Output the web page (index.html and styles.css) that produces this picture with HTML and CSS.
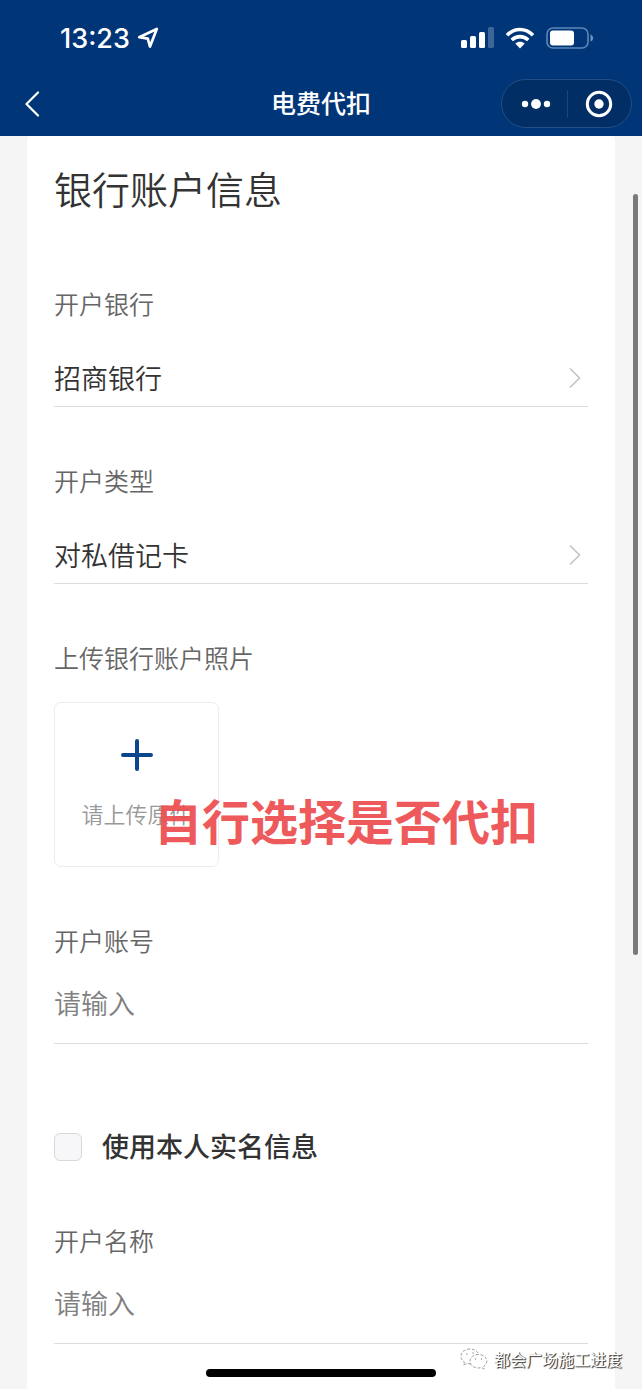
FILE: index.html
```html
<!DOCTYPE html>
<html lang="zh-CN">
<head>
<meta charset="utf-8">
<meta name="viewport" content="width=device-width, initial-scale=1">
<title>电费代扣</title>
<link rel="stylesheet" href="styles.css">
</head>
<body>
<div class="page">
  <header class="topbar">
    <div class="status">
      <div class="status-side">
        <span class="clock">13:23</span>
        <svg class="locate" width="22" height="22" viewBox="0 0 22 22" aria-hidden="true"><path d="M2.200 10.200 19.800 2 13 19.600 10.800 11.600Z" fill="none" stroke="currentColor" stroke-width="2.700" stroke-linejoin="round"/></svg>
      </div>
      <div class="status-side status-icons">
        <svg width="33" height="22" viewBox="0 0 33 22" aria-hidden="true"><g fill="#fff"><rect x="0" y="13" width="6" height="8" rx="1.5"/><rect x="9" y="9" width="6" height="12" rx="1.5"/><rect x="18" y="5" width="6" height="16" rx="1.5"/><rect x="27" y="0" width="6" height="21" rx="1.5" opacity=".24"/></g></svg>
        <svg width="30" height="22" viewBox="0 0 30 22" aria-hidden="true"><g fill="none" stroke="#fff" stroke-width="3.6"><path d="M2 8.2C9.500 .5 20.500 .5 28 8.200"/><path d="M6.700 13C11.500 8.500 18.500 8.500 23.300 13"/></g><path d="M10.300 16.600C13 14.200 17 14.200 19.700 16.600L15 21.500Z" fill="#fff"/></svg>
        <svg width="48" height="22" viewBox="0 0 48 22" aria-hidden="true"><rect x="1" y="1" width="41" height="20" rx="6" fill="none" stroke="#5f86b7" stroke-width="1.600"/><rect x="4" y="3.500" width="24" height="15" rx="3" fill="#fff"/><path d="M44.500 7.500C48 8.500 48 13.500 44.500 14.500Z" fill="#7094c1"/></svg>
      </div>
    </div>
    <nav class="nav">
      <button class="icon-button back" type="button" aria-label="返回"><svg width="16" height="26" viewBox="0 0 16 26"><path d="M14 1.500 2.500 13 14 24.500" fill="none" stroke="#fff" stroke-width="2.200" stroke-linecap="round" stroke-linejoin="round"/></svg></button>
      <h1 class="nav-title">电费代扣</h1>
      <div class="capsule">
        <button class="icon-button" type="button" aria-label="更多"><svg width="30" height="12" viewBox="0 0 30 12" fill="#fff"><circle cx="4" cy="6" r="3.200"/><circle cx="15" cy="6" r="4.900"/><circle cx="26" cy="6" r="3.200"/></svg></button>
        <button class="icon-button" type="button" aria-label="关闭"><svg width="28" height="28" viewBox="0 0 28 28"><circle cx="14" cy="14" r="11.700" fill="none" stroke="#fff" stroke-width="3"/><circle cx="14" cy="14" r="4.700" fill="#fff"/></svg></button>
      </div>
    </nav>
  </header>

  <main class="card">
    <h2 class="heading">银行账户信息</h2>
    <form class="form">
      <div class="field">
        <label class="label" for="bank">开户银行</label>
        <div class="picker">
          <select class="control" id="bank"><option>招商银行</option></select>
          <svg class="chevron" width="14" height="22" viewBox="0 0 14 22" aria-hidden="true"><path d="M2 1.500 11.500 11 2 20.500" fill="none" stroke="currentColor" stroke-width="1.600"/></svg>
        </div>
      </div>
      <div class="field">
        <label class="label" for="type">开户类型</label>
        <div class="picker">
          <select class="control" id="type"><option>对私借记卡</option></select>
          <svg class="chevron" width="14" height="22" viewBox="0 0 14 22" aria-hidden="true"><path d="M2 1.500 11.500 11 2 20.500" fill="none" stroke="currentColor" stroke-width="1.600"/></svg>
        </div>
      </div>
      <div class="field upload-field">
        <span class="label" id="photo-label">上传银行账户照片</span>
        <button class="upload" type="button" aria-describedby="photo-label">
          <svg width="32" height="32" viewBox="0 0 32 32" aria-hidden="true"><path d="M16 2V30M2 16H30" stroke="#0a468c" stroke-width="4" stroke-linecap="round"/></svg>
          <span>请上传原件</span>
        </button>
        <p class="caption">自行选择是否代扣</p>
      </div>
      <div class="field">
        <label class="label" for="account">开户账号</label>
        <input class="control text-input" id="account" type="text" placeholder="请输入">
      </div>
      <label class="check"><input class="checkbox" type="checkbox"><span>使用本人实名信息</span></label>
      <div class="field">
        <label class="label" for="name">开户名称</label>
        <input class="control text-input" id="name" type="text" placeholder="请输入">
      </div>
    </form>
  </main>

  <div class="scroll-thumb"></div>
  <div class="home-indicator"></div>
  <div class="watermark">
    <svg width="28" height="22" viewBox="0 0 28 22" aria-hidden="true"><g fill="#fff" stroke="#888" stroke-width=".8" stroke-dasharray="3 1.600"><path d="M10 1C4.500 1 1 4.400 1 8.300c0 2.500 1.300 4.500 3.400 5.800L3.500 17l3.300-1.700 3.200.5c5 0 9-3.400 9-7.500S15 1 10 1Z"/><path d="M18.500 6.500c-4.800 0-8.500 3-8.500 6.800s3.700 6.700 8.500 6.700l3-.4 2.800 1.500-.7-2.600c2-1.300 3.200-3.100 3.200-5.200 0-3.800-3.600-6.800-8.300-6.800Z"/></g><g fill="#888"><circle cx="7" cy="6" r=".7"/><circle cx="13" cy="5" r=".7"/><circle cx="15.500" cy="11" r=".7"/><circle cx="21.500" cy="11" r=".7"/></g></svg>
    <span>都会广场施工进度</span>
  </div>
</div>
</body>
</html>
```
FILE: styles.css
```css
* { box-sizing: border-box; }

body {
  margin: 0;
  background: #f5f5f5;
  color: #333;
  font-family: "Noto Sans CJK SC", "Noto Sans", sans-serif;
}

h1, h2, p { margin: 0; }

button, input, select {
  margin: 0;
  padding: 0;
  border: 0;
  border-radius: 0;
  background: none;
  color: inherit;
  font: inherit;
}

svg { display: block; flex: none; }

.page {
  position: relative;
  display: flex;
  flex-direction: column;
  min-height: 100vh;
  overflow: hidden;
}

.topbar {
  padding: 16px 10px 8px;
  background: #003578;
  color: #fff;
}

.status {
  display: flex;
  justify-content: space-between;
  align-items: center;
  height: 44px;
  padding: 0 38px 0 50px;
}

.status-side {
  display: flex;
  align-items: center;
  gap: 7px;
}

.status-icons { gap: 11px; }

.clock {
  padding-top: 2px;
  font: 500 27px/32px Inter, sans-serif;
}

.nav {
  display: grid;
  grid-template-columns: 1fr auto 1fr;
  align-items: center;
  margin-top: 19px;
}

.icon-button {
  display: flex;
  align-items: center;
  justify-content: center;
  cursor: pointer;
}

.back {
  justify-self: start;
  width: 44px;
  height: 48px;
}

.nav-title {
  padding-bottom: 3px;
  font-size: 25px;
  font-weight: 500;
  line-height: 36px;
}

.capsule {
  justify-self: end;
  display: grid;
  grid-template-columns: 1fr 1fr;
  align-items: center;
  width: 131px;
  height: 49px;
  border: 1px solid #244e84;
  border-radius: 25px;
  background: #002e65;
}

.capsule .icon-button { height: 28px; padding-left: 4px; }
.capsule .icon-button + .icon-button { border-left: 1px solid #1c4578; padding-left: 0; }

.card {
  flex: 1;
  margin: 0 27px;
  padding: 24px 27px 40px;
  border-radius: 4px 4px 0 0;
  background: #fff;
}

.heading {
  margin-bottom: 70px;
  font-size: 38px;
  font-weight: 350;
  line-height: 56px;
}

.form {
  display: flex;
  flex-direction: column;
  gap: 56px;
}

.field {
  display: flex;
  flex-direction: column;
}

.label {
  padding-bottom: 2px;
  color: #666;
  font-size: 25px;
  font-weight: 350;
  line-height: 34px;
}

.control {
  width: 100%;
  appearance: none;
  outline: none;
  font-size: 27px;
  font-weight: 350;
}

.picker {
  display: flex;
  align-items: center;
  height: 57px;
  margin-top: 28px;
  padding-right: 6px;
  border-bottom: 1px solid #ddd;
}

.picker .control { padding-bottom: 2px; }

.chevron { color: #c4c4c4; }

.text-input {
  height: 85px;
  padding-top: 2px;
  border-bottom: 1px solid #ddd;
}

.text-input::placeholder { color: #808080; opacity: 1; }

.upload-field { position: relative; }

.upload {
  display: flex;
  flex-direction: column;
  align-items: center;
  gap: 26px;
  width: 165px;
  height: 165px;
  margin-top: 26px;
  padding-top: 36px;
  border: 1px solid #ececec;
  border-radius: 7px;
  color: #999;
  font-size: 22px;
  font-weight: 350;
  line-height: 32px;
  cursor: pointer;
}

.caption {
  position: absolute;
  left: 100px;
  bottom: 16px;
  color: #ed4f52;
  font-size: 48px;
  font-weight: 700;
  line-height: 64px;
  opacity: 0.94;
  white-space: nowrap;
}

.check {
  display: flex;
  align-items: center;
  gap: 20px;
  margin-top: 26px;
  font-size: 27px;
  font-weight: 500;
  line-height: 39px;
}

.check span { padding-bottom: 2px; }

.checkbox {
  flex: none;
  width: 28px;
  height: 28px;
  appearance: none;
  border: 1px solid #d8d8da;
  border-radius: 6px;
  background: #f7f7f9;
}

.scroll-thumb {
  position: absolute;
  top: 194px;
  right: 4px;
  width: 5px;
  height: 761px;
  border-radius: 3px;
  background: #7a7a7a;
}

.home-indicator {
  position: absolute;
  bottom: 12px;
  left: 50%;
  width: 230px;
  height: 8px;
  margin-left: -115px;
  border-radius: 4px;
  background: #000;
}

.watermark {
  position: absolute;
  right: 20px;
  bottom: 18px;
  display: flex;
  align-items: center;
  gap: 6px;
  color: #fff;
  font-size: 16px;
  line-height: 24px;
  text-shadow: 1px 1px 1px #333, 1px 0 0 #777;
}
```
